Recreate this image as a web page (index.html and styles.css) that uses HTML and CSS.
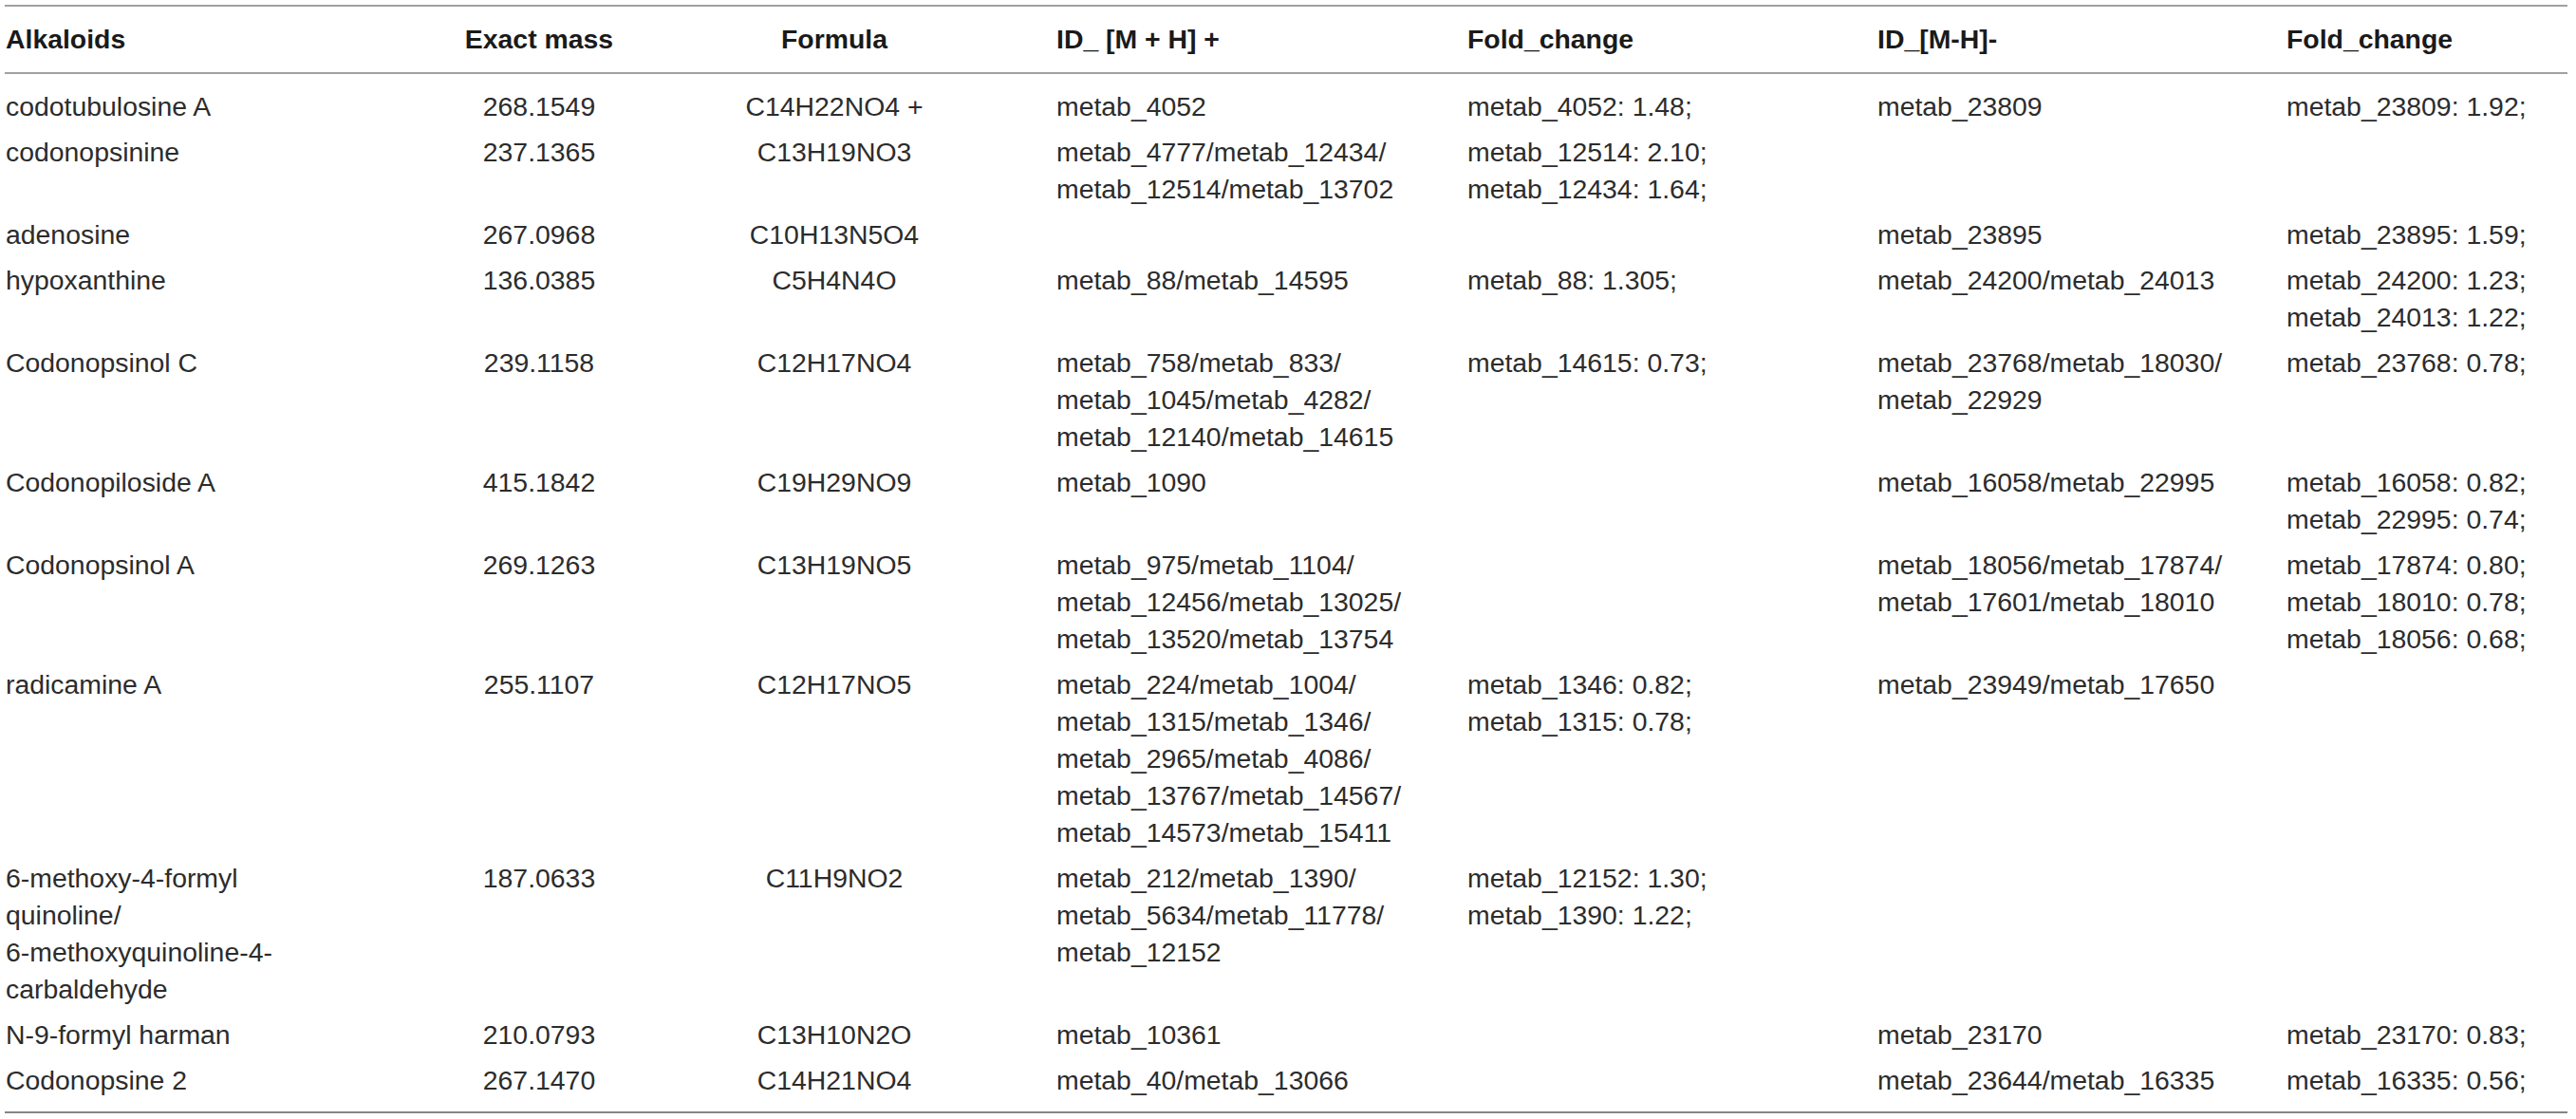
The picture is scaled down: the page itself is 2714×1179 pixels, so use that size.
FILE: index.html
```html
<!DOCTYPE html>
<html lang="en">
<head>
<meta charset="utf-8">
<title>Alkaloids</title>
<link rel="stylesheet" href="styles.css">
</head>
<body>
<div class="page">
<table class="alk">
<colgroup>
<col class="c1"><col class="c2"><col class="c3"><col class="c4"><col class="c5"><col class="c6"><col class="c7">
</colgroup>
<thead>
<tr>
<th class="left">Alkaloids</th>
<th class="center">Exact mass</th>
<th class="center">Formula</th>
<th class="left id1">ID_ [M + H] +</th>
<th class="left">Fold_change</th>
<th class="left">ID_[M-H]-</th>
<th class="left">Fold_change</th>
</tr>
</thead>
<tbody>
<tr>
<td>codotubulosine A</td>
<td class="center">268.1549</td>
<td class="center">C14H22NO4 +</td>
<td class="id1">metab_4052</td>
<td>metab_4052: 1.48;</td>
<td>metab_23809</td>
<td>metab_23809: 1.92;</td>
</tr>
<tr>
<td>codonopsinine</td>
<td class="center">237.1365</td>
<td class="center">C13H19NO3</td>
<td class="id1">metab_4777/metab_12434/<br>metab_12514/metab_13702</td>
<td>metab_12514: 2.10;<br>metab_12434: 1.64;</td>
<td></td>
<td></td>
</tr>
<tr>
<td>adenosine</td>
<td class="center">267.0968</td>
<td class="center">C10H13N5O4</td>
<td class="id1"></td>
<td></td>
<td>metab_23895</td>
<td>metab_23895: 1.59;</td>
</tr>
<tr>
<td>hypoxanthine</td>
<td class="center">136.0385</td>
<td class="center">C5H4N4O</td>
<td class="id1">metab_88/metab_14595</td>
<td>metab_88: 1.305;</td>
<td>metab_24200/metab_24013</td>
<td>metab_24200: 1.23;<br>metab_24013: 1.22;</td>
</tr>
<tr>
<td>Codonopsinol C</td>
<td class="center">239.1158</td>
<td class="center">C12H17NO4</td>
<td class="id1">metab_758/metab_833/<br>metab_1045/metab_4282/<br>metab_12140/metab_14615</td>
<td>metab_14615: 0.73;</td>
<td>metab_23768/metab_18030/<br>metab_22929</td>
<td>metab_23768: 0.78;</td>
</tr>
<tr>
<td>Codonopiloside A</td>
<td class="center">415.1842</td>
<td class="center">C19H29NO9</td>
<td class="id1">metab_1090</td>
<td></td>
<td>metab_16058/metab_22995</td>
<td>metab_16058: 0.82;<br>metab_22995: 0.74;</td>
</tr>
<tr>
<td>Codonopsinol A</td>
<td class="center">269.1263</td>
<td class="center">C13H19NO5</td>
<td class="id1">metab_975/metab_1104/<br>metab_12456/metab_13025/<br>metab_13520/metab_13754</td>
<td></td>
<td>metab_18056/metab_17874/<br>metab_17601/metab_18010</td>
<td>metab_17874: 0.80;<br>metab_18010: 0.78;<br>metab_18056: 0.68;</td>
</tr>
<tr>
<td>radicamine A</td>
<td class="center">255.1107</td>
<td class="center">C12H17NO5</td>
<td class="id1">metab_224/metab_1004/<br>metab_1315/metab_1346/<br>metab_2965/metab_4086/<br>metab_13767/metab_14567/<br>metab_14573/metab_15411</td>
<td>metab_1346: 0.82;<br>metab_1315: 0.78;</td>
<td>metab_23949/metab_17650</td>
<td></td>
</tr>
<tr>
<td>6-methoxy-4-formyl<br>quinoline/<br>6-methoxyquinoline-4-<br>carbaldehyde</td>
<td class="center">187.0633</td>
<td class="center">C11H9NO2</td>
<td class="id1">metab_212/metab_1390/<br>metab_5634/metab_11778/<br>metab_12152</td>
<td>metab_12152: 1.30;<br>metab_1390: 1.22;</td>
<td></td>
<td></td>
</tr>
<tr>
<td>N-9-formyl harman</td>
<td class="center">210.0793</td>
<td class="center">C13H10N2O</td>
<td class="id1">metab_10361</td>
<td></td>
<td>metab_23170</td>
<td>metab_23170: 0.83;</td>
</tr>
<tr>
<td>Codonopsine 2</td>
<td class="center">267.1470</td>
<td class="center">C14H21NO4</td>
<td class="id1">metab_40/metab_13066</td>
<td></td>
<td>metab_23644/metab_16335</td>
<td>metab_16335: 0.56;</td>
</tr>
</tbody>
</table>
</div>
</body>
</html>
```

FILE: styles.css
```css
html, body {
  margin: 0;
  padding: 0;
  background: #ffffff;
}

.page {
  padding: 5px 9px 0 5px;
}

.alk {
  width: 2700px;
  table-layout: fixed;
  border-collapse: collapse;
  font-family: "Liberation Sans", Arial, Helvetica, sans-serif;
  font-size: 28.4px;
  line-height: 39px;
  color: #2c2c2c;
  border-top: 2px solid #a0a0a0;
  border-bottom: 2px solid #858585;
}

.c1 { width: 425px; }
.c2 { width: 276px; }
.c3 { width: 346px; }
.c4 { width: 494px; }
.c5 { width: 432px; }
.c6 { width: 431px; }
.c7 { width: 296px; }

.alk th {
  font-weight: bold;
  color: #1a1a1a;
  padding: 15px 0;
  border-bottom: 2px solid #a0a0a0;
  white-space: nowrap;
}

.alk td {
  padding: 4.5px 0;
  vertical-align: top;
  text-align: left;
  white-space: nowrap;
}

.alk th:first-child,
.alk td:first-child {
  padding-left: 1px;
}

.alk tbody tr:first-child td {
  padding-top: 14.5px;
}

.alk tbody tr:last-child td {
  padding-bottom: 13px;
}

.left { text-align: left; }
.alk .center { text-align: center; }
.alk .id1 { padding-left: 61px; }
```
